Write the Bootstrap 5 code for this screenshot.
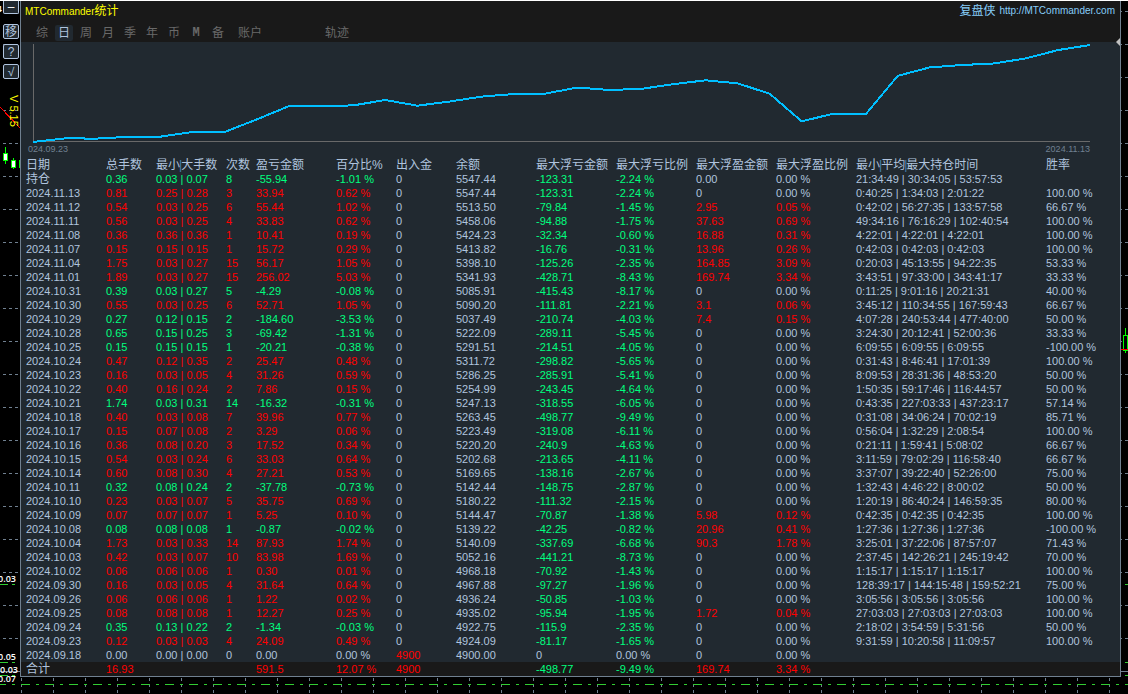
<!DOCTYPE html>
<html lang="zh-CN">
<head>
<meta charset="utf-8">
<meta name="viewport" content="width=device-width, initial-scale=1">
<title>MTCommander统计</title>
<link href="https://cdn.jsdelivr.net/npm/bootstrap@5.3.0/dist/css/bootstrap.min.css" rel="stylesheet">
<style>
  :root { --ink: #b0c4de; --panel: #212930; --bar: #191919; --slate: #708090; }
  body { background: #000; color: var(--ink); border-top: 1px solid #fff; font: 11px/14px "Liberation Sans", "Noto Sans CJK SC", sans-serif; }
  .workspace { display: grid; grid-template-columns: 20px minmax(0, 1fr) 7px; }
  .gutter svg { position: absolute; top: 0; left: 0; overflow: visible; }
  .tool-btn { position: relative; width: 16px; height: 15px; padding: 0; line-height: 12px; font-size: 12px; color: var(--ink); background: var(--panel); border: 1px solid var(--ink); border-radius: 2px; overflow: hidden; }
  .tool-btn.cut { height: 13px; border-top: 0; border-radius: 0 0 2px 2px; color: #fff; line-height: 8px; }
  .tools { gap: 5px; padding-left: 3px; }
  .tools .cut { margin-bottom: 5px; }
  .version { position: relative; writing-mode: vertical-rl; color: #ff0; line-height: 13px; margin: 11px 0 0 3px; }
  .stats { border: 1px solid var(--slate); border-top: 0; background: var(--panel); }
  .stats-head { background: var(--bar); height: 41px; padding: 2px 5px 0 4px; }
  .title-text, .site-link { font-size: 10px; line-height: 16px; }
  .title-text { color: #ff0; margin: 0; font-weight: 400; }
  .site-link { color: #87cefa; text-decoration: none; }
  .cjk { font-size: 12px; }
  .tabs { gap: 4px; padding-left: 8px; margin-top: 5px; }
  .tab-btn { width: 18px; height: 16px; padding: 0; border: 0; border-radius: 2px; background: transparent; color: #696969; font-size: 12px; line-height: 16px; }
  .tab-btn.wide { width: 38px; }
  .tab-btn.on { background: var(--panel); color: var(--ink); }
  .tab-btn.latin { font: 700 12px/16px "Liberation Mono", monospace; }
  .track { margin-left: 45px; }
  .plot { height: 116px; padding: 2px 30px 0 12px; }
  .plot svg { display: block; width: 100%; height: 98px; overflow: visible; }
  .dates { font-size: 9px; line-height: 14px; color: var(--slate); margin-left: -5px; }
  .grid-table { table-layout: fixed; width: 100%; white-space: nowrap; }
  .grid-table th, .grid-table td { height: 14px; padding: 0 0 0 5px; line-height: 14px; font-weight: 400; overflow: visible; }
  .grid-table thead th, .grid-table .cn { font-size: 12px; }
  .grid-table i { font: 12px/14px "Liberation Sans", sans-serif; color: #4682b4; margin: 0 -1px; }
  .grid-table tfoot { background: var(--bar); }
  .up { color: #f00; }
  .down { color: #00ff7f; }
  .axis svg { display: block; width: 100%; height: 17px; }
  .price { font: 600 9px "Open Sans", sans-serif; fill: #fff; text-anchor: end; }
  .handle { position: absolute; right: 0; top: 37px; width: 4px; height: 8px; background: #c0c0c0; clip-path: polygon(100% 0, 100% 100%, 0 50%); }
</style>
</head>
<body>
<main class="workspace">
  <aside class="gutter position-relative">
    <svg width="20" height="676" viewBox="0 1 20 676" shape-rendering="crispEdges" aria-hidden="true">
      <defs><pattern id="hgrid" width="6" height="33" patternUnits="userSpaceOnUse" x="3" y="11"><rect width="3" height="1" fill="#708090"/></pattern></defs>
      <rect y="1" width="20" height="676" fill="url(#hgrid)"/>
      <path d="M0 107L20 128" stroke="#f00" fill="none"/>
      <path d="M5.500 147V164M13.500 158V169M19.500 160V168" stroke="#0f0"/>
      <rect x="3.500" y="153.500" width="4" height="7" fill="#fff" stroke="#0f0"/>
      <rect x="11.500" y="160.500" width="4" height="7" fill="#fff" stroke="#0f0"/>
      <path d="M0 584.500H8M12 584.500H15M0 662.500H8M12 662.500H15M0 675.500H8M12 675.500H15" stroke="#32cd32"/>
      <path d="M0 671.500H20" stroke="#708090"/>
      <text class="price" x="16" y="582">0.03</text>
      <text class="price" x="16" y="660">0.05</text>
      <text class="price" x="18" y="673">0.03</text>
      <text class="price" x="16" y="682">0.07</text>
      <text class="price" x="2" y="12">4</text>
    </svg>
    <div class="tools d-flex flex-column">
      <button type="button" class="tool-btn cut" aria-label="最小化">–</button>
      <button type="button" class="tool-btn">移</button>
      <button type="button" class="tool-btn">?</button>
      <button type="button" class="tool-btn">√</button>
      <span class="version">V 5.15</span>
    </div>
  </aside>

  <section class="stats position-relative">
    <header class="stats-head">
      <div class="d-flex justify-content-between">
        <h1 class="title-text">MTCommander<span class="cjk">统计</span></h1>
        <a class="site-link d-flex gap-1" href="http://MTCommander.com"><span class="cjk">复盘侠</span><span>http://MTCommander.com</span></a>
      </div>
      <nav class="tabs d-flex">
        <button type="button" class="tab-btn">综</button>
        <button type="button" class="tab-btn on">日</button>
        <button type="button" class="tab-btn">周</button>
        <button type="button" class="tab-btn">月</button>
        <button type="button" class="tab-btn">季</button>
        <button type="button" class="tab-btn">年</button>
        <button type="button" class="tab-btn">币</button>
        <button type="button" class="tab-btn latin">M</button>
        <button type="button" class="tab-btn">备</button>
        <button type="button" class="tab-btn wide">账户</button>
        <button type="button" class="tab-btn wide track">轨迹</button>
      </nav>
    </header>
    <span class="handle"></span>

    <div class="plot">
      <svg viewBox="0 0 1056 98" preserveAspectRatio="none" role="img" aria-label="余额曲线" shape-rendering="crispEdges">
        <path d="M0 0V97M0 97H1056" stroke="#696969" fill="none" vector-effect="non-scaling-stroke"/>
        <polyline id="curve" fill="none" stroke="#00bfff" stroke-width="2" vector-effect="non-scaling-stroke"/>
      </svg>
      <div class="dates d-flex justify-content-between"><span>024.09.23</span><span>2024.11.13</span></div>
    </div>

    <table class="grid-table">
      <colgroup>
        <col width="80"><col width="50"><col width="70"><col width="30"><col width="80"><col width="60"><col width="60">
        <col width="80"><col width="80"><col width="80"><col width="80"><col width="80"><col width="190"><col>
      </colgroup>
      <thead><tr>
        <th>日期</th><th>总手数</th><th>最小<i>|</i>大手数</th><th>次数</th><th>盈亏金额</th><th>百分比%</th><th>出入金</th>
        <th>余额</th><th>最大浮亏金额</th><th>最大浮亏比例</th><th>最大浮盈金额</th><th>最大浮盈比例</th><th>最小<i>|</i>平均<i>|</i>最大持仓时间</th><th>胜率</th>
      </tr></thead>
      <tbody id="rows"></tbody>
      <tfoot><tr>
        <td class="cn">合计</td><td class="up">16.93</td><td></td><td></td><td class="up">591.5</td><td class="up">12.07 %</td><td class="up">4900</td>
        <td></td><td class="down">-498.77</td><td class="down">-9.49 %</td><td class="up">169.74</td><td class="up">3.34 %</td><td></td><td></td>
      </tr></tfoot>
    </table>
  </section>

  <aside class="gutter position-relative">
    <svg width="7" height="676" viewBox="1121 1 7 676" shape-rendering="crispEdges" aria-hidden="true">
      <rect x="1121" y="1" width="7" height="676" fill="url(#hgrid)"/>
      <path d="M1125.500 328V353" stroke="#0f0"/>
      <rect x="1123.500" y="335.500" width="4" height="15" fill="#000" stroke="#0f0"/>
      <path d="M1121 349.500H1128" stroke="#f00"/>
      <path d="M1125 584.500H1128M1125 662.500H1128M1125 675.500H1128" stroke="#32cd32"/>
      <path d="M1121 671.500H1128" stroke="#708090"/>
    </svg>
  </aside>
</main>
<footer class="axis">
  <svg shape-rendering="crispEdges" aria-hidden="true">
    <defs>
      <pattern id="vgrid" width="32" height="6" patternUnits="userSpaceOnUse" x="21" y="1"><rect width="1" height="3" fill="#708090"/></pattern>
      <pattern id="dashdot" width="24" height="17" patternUnits="userSpaceOnUse" x="21"><path d="M0 7.500H9M15 7.500H18" stroke="#32cd32"/></pattern>
    </defs>
    <rect width="100%" height="17" fill="url(#vgrid)"/>
    <rect width="100%" height="17" fill="url(#dashdot)"/>
  </svg>
</footer>

<script src="https://cdn.jsdelivr.net/npm/bootstrap@5.3.0/dist/js/bootstrap.bundle.min.js"></script>
<script>
// date, lots, min, max, count, profit, pct, deposit, balance, maxLoss, lossPct, maxGain, gainPct, min/avg/max duration, win rate
const data = `持仓,0.36,0.03,0.07,8,-55.94,-1.01,0,5547.44,-123.31,-2.24,0.00,0.00,21:34:49,30:34:05,53:57:53,
2024.11.13,0.81,0.25,0.28,3,33.94,0.62,0,5547.44,-123.31,-2.24,0,0.00,0:40:25,1:34:03,2:01:22,100.00
2024.11.12,0.54,0.03,0.25,6,55.44,1.02,0,5513.50,-79.84,-1.45,2.95,0.05,0:42:02,56:27:35,133:57:58,66.67
2024.11.11,0.56,0.03,0.25,4,33.83,0.62,0,5458.06,-94.88,-1.75,37.63,0.69,49:34:16,76:16:29,102:40:54,100.00
2024.11.08,0.36,0.36,0.36,1,10.41,0.19,0,5424.23,-32.34,-0.60,16.88,0.31,4:22:01,4:22:01,4:22:01,100.00
2024.11.07,0.15,0.15,0.15,1,15.72,0.29,0,5413.82,-16.76,-0.31,13.96,0.26,0:42:03,0:42:03,0:42:03,100.00
2024.11.04,1.75,0.03,0.27,15,56.17,1.05,0,5398.10,-125.26,-2.35,164.85,3.09,0:20:03,45:13:55,94:22:35,53.33
2024.11.01,1.89,0.03,0.27,15,256.02,5.03,0,5341.93,-428.71,-8.43,169.74,3.34,3:43:51,97:33:00,343:41:17,33.33
2024.10.31,0.39,0.03,0.27,5,-4.29,-0.08,0,5085.91,-415.43,-8.17,0,0.00,0:11:25,9:01:16,20:21:31,40.00
2024.10.30,0.55,0.03,0.25,6,52.71,1.05,0,5090.20,-111.81,-2.21,3.1,0.06,3:45:12,110:34:55,167:59:43,66.67
2024.10.29,0.27,0.12,0.15,2,-184.60,-3.53,0,5037.49,-210.74,-4.03,7.4,0.15,4:07:28,240:53:44,477:40:00,50.00
2024.10.28,0.65,0.15,0.25,3,-69.42,-1.31,0,5222.09,-289.11,-5.45,0,0.00,3:24:30,20:12:41,52:00:36,33.33
2024.10.25,0.15,0.15,0.15,1,-20.21,-0.38,0,5291.51,-214.51,-4.05,0,0.00,6:09:55,6:09:55,6:09:55,-100.00
2024.10.24,0.47,0.12,0.35,2,25.47,0.48,0,5311.72,-298.82,-5.65,0,0.00,0:31:43,8:46:41,17:01:39,100.00
2024.10.23,0.16,0.03,0.05,4,31.26,0.59,0,5286.25,-285.91,-5.41,0,0.00,8:09:53,28:31:36,48:53:20,50.00
2024.10.22,0.40,0.16,0.24,2,7.86,0.15,0,5254.99,-243.45,-4.64,0,0.00,1:50:35,59:17:46,116:44:57,50.00
2024.10.21,1.74,0.03,0.31,14,-16.32,-0.31,0,5247.13,-318.55,-6.05,0,0.00,0:43:35,227:03:33,437:23:17,57.14
2024.10.18,0.40,0.03,0.08,7,39.96,0.77,0,5263.45,-498.77,-9.49,0,0.00,0:31:08,34:06:24,70:02:19,85.71
2024.10.17,0.15,0.07,0.08,2,3.29,0.06,0,5223.49,-319.08,-6.11,0,0.00,0:56:04,1:32:29,2:08:54,100.00
2024.10.16,0.36,0.08,0.20,3,17.52,0.34,0,5220.20,-240.9,-4.63,0,0.00,0:21:11,1:59:41,5:08:02,66.67
2024.10.15,0.54,0.03,0.24,6,33.03,0.64,0,5202.68,-213.65,-4.11,0,0.00,3:11:59,79:02:29,116:58:40,66.67
2024.10.14,0.60,0.08,0.30,4,27.21,0.53,0,5169.65,-138.16,-2.67,0,0.00,3:37:07,39:22:40,52:26:00,75.00
2024.10.11,0.32,0.08,0.24,2,-37.78,-0.73,0,5142.44,-148.75,-2.87,0,0.00,1:32:43,4:46:22,8:00:02,50.00
2024.10.10,0.23,0.03,0.07,5,35.75,0.69,0,5180.22,-111.32,-2.15,0,0.00,1:20:19,86:40:24,146:59:35,80.00
2024.10.09,0.07,0.07,0.07,1,5.25,0.10,0,5144.47,-70.87,-1.38,5.98,0.12,0:42:35,0:42:35,0:42:35,100.00
2024.10.08,0.08,0.08,0.08,1,-0.87,-0.02,0,5139.22,-42.25,-0.82,20.96,0.41,1:27:36,1:27:36,1:27:36,-100.00
2024.10.04,1.73,0.03,0.33,14,87.93,1.74,0,5140.09,-337.69,-6.68,90.3,1.78,3:25:01,37:22:06,87:57:07,71.43
2024.10.03,0.42,0.03,0.07,10,83.98,1.69,0,5052.16,-441.21,-8.73,0,0.00,2:37:45,142:26:21,245:19:42,70.00
2024.10.02,0.06,0.06,0.06,1,0.30,0.01,0,4968.18,-70.92,-1.43,0,0.00,1:15:17,1:15:17,1:15:17,100.00
2024.09.30,0.16,0.03,0.05,4,31.64,0.64,0,4967.88,-97.27,-1.96,0,0.00,128:39:17,144:15:48,159:52:21,75.00
2024.09.26,0.06,0.06,0.06,1,1.22,0.02,0,4936.24,-50.85,-1.03,0,0.00,3:05:56,3:05:56,3:05:56,100.00
2024.09.25,0.08,0.08,0.08,1,12.27,0.25,0,4935.02,-95.94,-1.95,1.72,0.04,27:03:03,27:03:03,27:03:03,100.00
2024.09.24,0.35,0.13,0.22,2,-1.34,-0.03,0,4922.75,-115.9,-2.35,0,0.00,2:18:02,3:54:59,5:31:56,50.00
2024.09.23,0.12,0.03,0.03,4,24.09,0.49,0,4924.09,-81.17,-1.65,0,0.00,9:31:59,10:20:58,11:09:57,100.00
2024.09.18,0.00,0.00,0.00,0,0.00,0.00,4900,4900.00,0,0.00,0,0.00,,,,`.split('\n').map(r => r.split(','));

const tone = v => v > 0 ? 'up' : v < 0 ? 'down' : '';
const cell = (text, cls) => `<td${cls ? ` class="${cls}"` : ''}>${text}</td>`;
document.getElementById('rows').innerHTML = data.map(r => {
  const p = tone(+r[5]);
  return '<tr>' + cell(r[0], r[0] === '持仓' ? 'cn' : '') + cell(r[1], p) + cell(`${r[2]} | ${r[3]}`, p) + cell(r[4], p) +
    cell(r[5], p) + cell(r[6] + ' %', p) + cell(r[7], tone(+r[7])) + cell(r[8]) + cell(r[9], tone(+r[9])) + cell(r[10] + ' %', tone(+r[10])) +
    cell(r[11], tone(+r[11])) + cell(r[12] + ' %', tone(+r[12])) + cell(r[13] ? r.slice(13, 16).join(' | ') : '') + cell(r[16] ? r[16] + ' %' : '') + '</tr>';
}).join('');

// balance curve, oldest day first, without the open-position row
const balances = data.slice(1).map(r => +r[8]).reverse();
const low = Math.min(...balances), high = Math.max(...balances);
document.getElementById('curve').setAttribute('points',
  balances.map((b, i) => `${i * 1056 / (balances.length - 1)},${98 - (b - low) / (high - low) * 97}`).join(' '));
</script>
</body>
</html>
